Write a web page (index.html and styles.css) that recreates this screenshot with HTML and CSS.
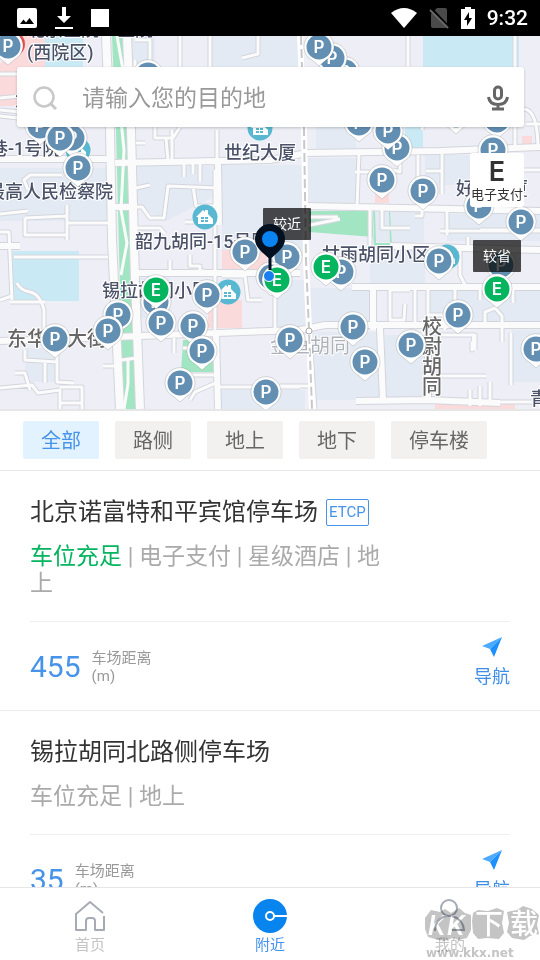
FILE: index.html
```
<!DOCTYPE html>
<html lang="zh-CN">
<head>
    <meta charset="UTF-8">
    <meta name="viewport" content="width=device-width, initial-scale=1.0">
    <title>附近停车场</title>
    <link rel="stylesheet" href="styles.css">
</head>
<body>
    <!-- Status bar -->
    <header class="status-bar">
        <svg class="status-icon" viewBox="0 0 20 20" width="20" height="20">
            <path fill="#fff" fill-rule="evenodd" d="M2 0h16a2 2 0 0 1 2 2v16a2 2 0 0 1-2 2H2a2 2 0 0 1-2-2V2a2 2 0 0 1 2-2zM3 16h14l-4.500-6-3.500 4.500-2.500-3z"/>
        </svg>
        <svg class="status-icon" viewBox="0 0 18 24" width="18" height="24">
            <path fill="#fff" d="M7 1h4v9h5l-7 7-7-7h5zM0 21h18v2H0z"/>
        </svg>
        <span class="status-square"></span>
        <div class="status-right">
            <svg viewBox="0 0 26 20" width="26" height="20">
                <path fill="#fff" d="M0 5Q13-5 26 5L13 20z"/>
            </svg>
            <svg viewBox="0 0 20 22" width="20" height="22">
                <path fill="#4a4a4a" d="M8 1h8a2 2 0 0 1 2 2v16a2 2 0 0 1-2 2H4a2 2 0 0 1-2-2V7z"/>
                <path stroke="#000" stroke-width="2" d="M2 1l18 19"/>
                <path stroke="#666" stroke-width="2" d="M1 3l18 18"/>
            </svg>
            <svg viewBox="0 0 14 22" width="14" height="22">
                <path fill="#fff" d="M4 0h6v2h4v20H0V2h4z"/>
                <path fill="#000" d="M8 5l-5 8h3v6l5-8H8z"/>
            </svg>
            <span class="clock">9:32</span>
        </div>
    </header>

    <!-- Map -->
    <section class="map">
        <svg class="map-canvas" viewBox="0 36 540 373" preserveAspectRatio="xMidYMin slice">
            <defs>
                <g id="pin-p">
                    <path class="pin-shape" d="M0 19L-7 13A15 15 0 1 1 7 13z"/>
                    <circle class="pin-blue" r="12.500"/>
                    <text class="pin-letter" x="0" y="6">P</text>
                </g>
                <g id="pin-e">
                    <path class="pin-shape" d="M0 19L-7 13A15 15 0 1 1 7 13z"/>
                    <circle class="pin-green" r="12.500"/>
                    <text class="pin-letter" x="0" y="6">E</text>
                </g>
                <g id="building">
                    <circle class="poi" r="12.500"/>
                    <path fill="#fff" d="M-9 0L-2-7 0-5V-7H3V-3L8 2V7H-7V0z"/>
                    <path class="poi-window" d="M-4 0h3v2h-3zM0 0h3v2H0zM-4 3h3v2h-3zM0 3h3v2H0z"/>
                </g>
                <path id="roads-small" d="M0 98L20 96M0 116L18 118M0 110L20 112M0 74H20M135 60V90L142 92 148 75H160M135 40H150V74M180 36V70M210 36V70M135 100H300M258 36V54L242 58M348 92L408 90V36M408 85L426 89H464M426 92L422 130M425 72H436V84H426M483 99H512M515 36V150M524 109Q538 110 538 150M526 124H540
                    M155 127V138H166L168 160M180 127L173 138H158M172 130V160M217 130V162M0 214L28 211M25 218V235H68M25 218L67 216M67 205V240M67 223H108M28 190L24 180 30 175H62M0 232H9L12 300M14 257H108M17 283Q20 290 30 292T44 310V335M10 302H45M0 300L12 296
                    M136 143H145M136 188L150 185M133 207H142L150 218H164L168 186 218 188M193 186L196 206H215M184 163V177M193 163V174M200 163V182M135 228H160L165 234M135 273L205 271M215 170V330M170 260V272M190 255V266H200V272M222 276H245L248 300H262M185 222H200M205 280V298M240 250H300
                    M359 153L357 207M355 172H370M418 155V188M426 171H442V194M442 154V170M382 207V228H410M370 246V210M400 155V172L393 170M340 219L305 226M310 217H338M422 208V216H415M447 208V235M440 231H540M468 237V250M480 230H540M510 153V207M499 170H540
                    M428 288V326M390 289V320H404L405 304M390 290H410M415 284V326M428 315H443L445 330M455 285V325M480 285V300M513 285V303M460 250V275L465 285M472 342V350L474 334M485 325V312L495 308 502 316 502 342M440 335H475V350M511 333V385M440 376H486M470 390V406M480 386V406M490 402V382M500 402H540
                    M25 350V360L57 362M57 335V382L74 383M45 362V383M15 373H25L30 390M0 388L32 385 38 393 60 390V409M60 387H82V409M60 403H82M103 366H115M174 338V353M183 348H190M218 382L195 392 190 400M190 375H215M220 387H300M275 290V330M310 340L315 409M280 386H310M115 361L136 358"/>
                <path id="roads-large" d="M0 159H112M115 163L270 160 307 153 440 151 540 147M307 206L540 211M390 246L540 250M352 287H540M218 163L219 225M133 273H300M373 287V330M0 246H20M115 207H136M0 341L115 337 270 331 300 330 325 325H540M380 328L383 400M356 401L428 400 500 403M216 335L218 409M428 335V400"/>
                <path id="roads-main" d="M106 36L110 130 112 240 120 409M127 36L131 130 135 280 140 409"/>
            </defs>

            <!-- blocks, water and parks -->
            <rect class="land" x="0" y="36" width="540" height="373"/>
            <path class="block" d="M132 36h23v35h-23zM210 36h90v35h-90zM0 168h108v53H0zM136 166h80v30l-50 25-30-15zM222 165h82v92h-82zM308 158h50v48h-50zM374 212h50v30h-50zM447 214h93v27h-93zM370 246h55v38h-55zM428 285h112v40H428zM308 288h65v35h-65zM25 348h30v34H25zM140 278h30v40h-30zM312 332h67v68h-67zM385 335h43v65h-43zM512 330h28v52h-28zM220 390h85v19h-85zM275 280h32v48h-32zM425 155h55v30h-55zM316 127h40v22h-40z"/>
            <path class="water" d="M45 36h38v35H45zM13 251h66v50H13zM423 36h96v35h-96zM405 127h18v25h-18z"/>
            <path class="pink" d="M0 64L18 36h27v70H0zM222 250h45v22h-45zM208 300h34v28h-34zM375 190h14v13h-14zM522 136h10v9h-10zM435 403h80v6h-80z"/>
            <path class="park" d="M112 36h12l5 94 8 279h-14L116 130zM309 211h63l2 35h18l-2-35h-17l1 26-65-5zM183 340h30v32h-32zM375 211h14l1 32h-14z"/>

            <use class="road-edge" href="#roads-small"/>
            <use class="road-edge road-edge-large" href="#roads-large"/>
            <use class="road-edge road-edge-main" href="#roads-main"/>
            <use class="road" href="#roads-small"/>
            <use class="road road-large" href="#roads-large"/>
            <use class="road road-main" href="#roads-main"/>
            <path class="road" d="M117 36L123 70 119 100 124 150 121 210 127 243 121 275M128 360V384L124 409"/>
            <path class="rail-bed" d="M300 36L304 130 306 260 309 330 312 409"/>
            <path class="rail" d="M301 36L304 130 306 260 309 330 312 409"/>
            <circle class="station" cx="309" cy="331" r="3"/>

            <!-- place names -->
            <g class="place">
                <text x="27" y="36">北京医院一医院</text>
                <text x="27" y="59">(西院区)</text>
                <text x="-10" y="155">巷-1号院</text>
                <text x="-13" y="198">最高人民检察院</text>
                <text x="224" y="159">世纪大厦</text>
                <text x="135" y="248">韶九胡同-15号院</text>
                <text x="102" y="297">锡拉胡同小区</text>
                <text x="322" y="261">甘雨胡同小区</text>
                <text x="456" y="195">好润大厦</text>
                <text x="15" y="106">大</text>
                <text x="530" y="405">青年</text>
                <text class="street" x="7" y="346">东华门大街</text>
                <text class="street light" x="270" y="353">金鱼胡同</text>
                <text class="street" x="422" y="334">校</text>
                <text class="street" x="422" y="354">尉</text>
                <text class="street" x="422" y="374">胡</text>
                <text class="street" x="422" y="394">同</text>
            </g>

            <!-- buildings -->
            <use href="#building" x="205" y="217"/>
            <use href="#building" x="260" y="128"/>
            <use href="#building" x="228" y="292"/>
            <use href="#building" x="447" y="257"/>
            <use href="#building" x="78" y="150"/>

            <!-- parking pins -->
            <circle cx="12" cy="44" r="13" fill="#e94f4f"/>
            <use href="#pin-p" x="8" y="46"/>
            <use href="#pin-p" x="148" y="75"/>
            <use href="#pin-p" x="345" y="72"/>
            <use href="#pin-p" x="332" y="58"/>
            <use href="#pin-p" x="319" y="47"/>
            <use href="#pin-p" x="72" y="138"/>
            <use href="#pin-p" x="40" y="126"/>
            <use href="#pin-p" x="60" y="138"/>
            <use href="#pin-p" x="78" y="168"/>
            <use href="#pin-p" x="359" y="123"/>
            <use href="#pin-p" x="397" y="148"/>
            <use href="#pin-p" x="388" y="131"/>
            <use href="#pin-p" x="456" y="115"/>
            <use href="#pin-p" x="497" y="120"/>
            <use href="#pin-p" x="493" y="150"/>
            <use href="#pin-p" x="382" y="180"/>
            <use href="#pin-p" x="423" y="191"/>
            <use href="#pin-p" x="479" y="206"/>
            <use href="#pin-p" x="521" y="222"/>
            <use href="#pin-p" x="439" y="261"/>
            <use href="#pin-p" x="501" y="265"/>
            <use href="#pin-p" x="287" y="257"/>
            <use href="#pin-p" x="245" y="252"/>
            <use href="#pin-p" x="341" y="272"/>
            <use href="#pin-p" x="271" y="277"/>
            <use href="#pin-p" x="207" y="295"/>
            <use href="#pin-p" x="156" y="302"/>
            <use href="#pin-p" x="118" y="315"/>
            <use href="#pin-p" x="108" y="331"/>
            <use href="#pin-p" x="55" y="339"/>
            <use href="#pin-p" x="161" y="323"/>
            <use href="#pin-p" x="193" y="326"/>
            <use href="#pin-p" x="202" y="351"/>
            <use href="#pin-p" x="180" y="383"/>
            <use href="#pin-p" x="266" y="392"/>
            <use href="#pin-p" x="290" y="340"/>
            <use href="#pin-p" x="353" y="327"/>
            <use href="#pin-p" x="365" y="362"/>
            <use href="#pin-p" x="411" y="345"/>
            <use href="#pin-p" x="458" y="315"/>
            <use href="#pin-p" x="536" y="349"/>
            <use href="#pin-e" x="156" y="290"/>
            <use href="#pin-e" x="277" y="280"/>
            <use href="#pin-e" x="326" y="267"/>
            <use href="#pin-e" x="497" y="289"/>

            <!-- tips -->
            <g class="tip">
                <rect x="263" y="208" width="48" height="32" rx="1"/>
                <text x="287" y="229">较近</text>
                <rect x="473" y="240" width="48" height="32" rx="1"/>
                <text x="497" y="261">较省</text>
            </g>

            <!-- current position -->
            <circle cx="269" cy="276" r="5.500" fill="#1a7fee" stroke="#fff" stroke-width="1"/>
            <path fill="#03101f" d="M270 224a15 15 0 0 1 15 15c0 8-7 13-13.500 19v12h-3v-12C262 252 255 247 255 239a15 15 0 0 1 15-15z"/>
            <circle cx="270" cy="239" r="8" fill="#0a84f0"/>
        </svg>

        <div class="map-controls">
            <form class="search">
                <svg class="search-icon" viewBox="0 0 24 24" width="24" height="24">
                    <circle cx="11" cy="11" r="9.500" fill="none" stroke="#c8c8c8" stroke-width="2.500"/>
                    <path stroke="#c8c8c8" stroke-width="3" d="M17 17l6 6"/>
                </svg>
                <input class="search-input" type="text" placeholder="请输入您的目的地" aria-label="目的地">
                <button class="voice" type="button" aria-label="语音输入">
                    <svg viewBox="0 0 22 26" width="22" height="26">
                        <rect x="7.500" y="2" width="7" height="12" rx="3.500" fill="none" stroke="#666" stroke-width="3"/>
                        <path fill="none" stroke="#666" stroke-width="3" d="M1.500 12q1 7.500 9.500 7.500t9.500-7.500M11 19v5M5 24h12"/>
                    </svg>
                </button>
            </form>
            <button class="e-pay" type="button">
                <span class="e-pay-letter">E</span>
                <span class="e-pay-label">电子支付</span>
            </button>
        </div>
    </section>

    <!-- Filters -->
    <div class="filters">
        <button class="filter active" type="button">全部</button>
        <button class="filter" type="button">路侧</button>
        <button class="filter" type="button">地上</button>
        <button class="filter" type="button">地下</button>
        <button class="filter" type="button">停车楼</button>
    </div>

    <!-- Parking list -->
    <main class="parking-list">
        <article class="parking">
            <div class="parking-title">
                <h2>北京诺富特和平宾馆停车场</h2>
                <span class="tag">ETCP</span>
            </div>
            <p class="parking-info"><span class="free">车位充足</span> | 电子支付 | 星级酒店 | 地上</p>
            <div class="parking-row">
                <div class="distance">
                    <strong>455</strong>
                    <span>车场距离<br>(m)</span>
                </div>
                <button class="navigate" type="button">
                    <svg viewBox="0 0 20 20" width="20" height="20">
                        <path fill="#4dabff" d="M20 0L0 9l8 3z"/>
                        <path fill="#1c90ff" d="M20 0L8 12l4 8z"/>
                    </svg>
                    导航
                </button>
            </div>
        </article>
        <article class="parking">
            <div class="parking-title">
                <h2>锡拉胡同北路侧停车场</h2>
            </div>
            <p class="parking-info">车位充足 | 地上</p>
            <div class="parking-row">
                <div class="distance">
                    <strong>35</strong>
                    <span>车场距离<br>(m)</span>
                </div>
                <button class="navigate" type="button">
                    <svg viewBox="0 0 20 20" width="20" height="20">
                        <path fill="#4dabff" d="M20 0L0 9l8 3z"/>
                        <path fill="#1c90ff" d="M20 0L8 12l4 8z"/>
                    </svg>
                    导航
                </button>
            </div>
        </article>
    </main>

    <!-- Tabs -->
    <nav class="tabs">
        <a class="tab" href="#home">
            <svg viewBox="0 0 36 36" width="36" height="36">
                <path fill="none" stroke="#a6abb5" stroke-width="2" stroke-linejoin="round" d="M31 15L18 4 4 16v16h10V23q0-3 3-3h3q3 0 3 3v9h9V18"/>
            </svg>
            首页
        </a>
        <a class="tab active" href="#nearby">
            <svg viewBox="0 0 36 36" width="36" height="36">
                <circle cx="18" cy="18" r="17" fill="#0784ee"/>
                <circle cx="18" cy="18" r="4" fill="none" stroke="#fff" stroke-width="2"/>
                <path stroke="#fff" stroke-width="2" d="M22 18h14"/>
            </svg>
            附近
        </a>
        <a class="tab" href="#mine">
            <svg viewBox="0 0 36 36" width="36" height="36">
                <g fill="none" stroke="#a6abb5" stroke-width="2">
                    <circle cx="17" cy="10" r="8"/>
                    <path d="M3 33Q3 21 14 18M20 18Q31 21 32 32H20"/>
                </g>
            </svg>
            我的
        </a>
        <div class="watermark">
            <svg viewBox="0 0 116 54" width="116" height="54">
                <path class="watermark-plate" d="M1 12l6-8 9 2 5-3 6 4 8-5 6 5 6 2v15l-4 8-8 2-6-2-9 3-9-2-7-2-3-8zM49 7l5-3 10 1 9-3 7 3-2 12 2 10-5 6-12-1-9 1-5-6-1-12zM83 6l10-2 6-4 9 3 7 6-2 10 2 9-9 2-6 4-12-2-5-6 2-9z"/>
                <text class="watermark-name latin" x="4" y="29">K</text>
                <text class="watermark-name latin" x="23" y="29">K</text>
                <text class="watermark-name" x="51" y="28">下</text>
                <text class="watermark-name" x="86" y="28">载</text>
                <text class="watermark-site" x="2" y="51">www.kkx.net</text>
            </svg>
        </div>
    </nav>
</body>
</html>
```
FILE: styles.css
```
* {
    margin: 0;
    padding: 0;
    box-sizing: border-box;
}

body {
    display: flex;
    flex-direction: column;
    height: 100vh;
    font-family: Roboto, "Noto Sans CJK SC", sans-serif;
    background-color: #fff;
    color: #333;
    overflow: hidden;
}

button,
input {
    font-family: inherit;
    border: none;
    background: none;
}

button {
    cursor: pointer;
}

svg {
    display: block;
}

/* Status bar */
.status-bar {
    display: flex;
    flex-shrink: 0;
    align-items: center;
    gap: 18px;
    height: 36px;
    padding: 0 12px 0 17px;
    background-color: #000;
    color: #fff;
}

.status-square {
    width: 18px;
    height: 18px;
    background-color: #fff;
}

.status-right {
    display: flex;
    align-items: center;
    gap: 12px;
    margin-left: auto;
}

.clock {
    font-size: 21px;
    font-weight: 500;
}

/* Map */
.map {
    position: relative;
    flex-shrink: 0;
    overflow: hidden;
}

.map-canvas {
    width: 100%;
}

.land { fill: #eeeff6; }
.block { fill: #e3eaf3; }
.water { fill: #c9eaf5; }
.park { fill: #a2e5c3; }
.pink { fill: #fbdadc; }

.road-edge,
.road,
.rail-bed,
.rail {
    fill: none;
    stroke-linejoin: round;
}

.road-edge {
    stroke: #d3d5dc;
    stroke-width: 5px;
}

.road {
    stroke: #fbfbfc;
    stroke-width: 3px;
}

.road-edge-large { stroke-width: 8px; }
.road-large { stroke-width: 6px; }
.road-edge-main { stroke-width: 10px; }
.road-main { stroke-width: 8px; }

.rail-bed {
    stroke: #fff;
    stroke-width: 6px;
}

.rail {
    stroke: #c8c8c8;
    stroke-width: 2px;
    stroke-dasharray: 9 4;
}

.station {
    fill: #fff;
    stroke: #aaa;
}

.place {
    font-size: 18px;
    font-weight: 500;
    fill: #4b5268;
    stroke: #fff;
    stroke-width: 2px;
    paint-order: stroke;
}

.street {
    font-size: 20px;
    fill: #666;
}

.light {
    font-weight: 400;
    fill: #b0b2ba;
}

.poi,
.poi-window {
    fill: #58b8d2;
}

.poi,
.poi-window,
.pin-letter {
    stroke: none;
}

.pin-shape {
    fill: #fff;
    stroke: rgba(0, 0, 0, 0.15);
    stroke-width: 1px;
}

.pin-blue { fill: #638fb3; }
.pin-green { fill: #04b45f; }

.pin-letter {
    font-family: Inter, sans-serif;
    font-size: 17px;
    font-weight: 600;
    fill: #fff;
    text-anchor: middle;
}

.tip {
    font-size: 14px;
    fill: #fff;
    text-anchor: middle;
}

.tip rect {
    fill: rgba(0, 0, 0, 0.7);
}

/* Search and map buttons */
.map-controls {
    position: absolute;
    top: 31px;
    left: 17px;
    right: 16px;
    display: flex;
    flex-direction: column;
    align-items: flex-end;
    gap: 26px;
}

.search {
    display: flex;
    align-items: center;
    width: 100%;
    height: 60px;
    padding: 2px 15px 0 16px;
    background-color: #fff;
    border-radius: 3px;
    box-shadow: 0 1px 3px rgba(0, 0, 0, 0.2);
}

.search-input {
    flex: 1;
    min-width: 0;
    margin-left: 25px;
    font-size: 23px;
    color: #333;
    outline: none;
}

.search-input::placeholder {
    color: #999;
}

.e-pay {
    display: flex;
    flex-direction: column;
    align-items: center;
    justify-content: flex-end;
    width: 54px;
    height: 54px;
    padding-bottom: 3px;
    background-color: #fff;
    border-radius: 3px;
    color: #333;
}

.e-pay-letter {
    font-family: Inter, sans-serif;
    font-size: 27px;
    font-weight: 600;
    line-height: 28px;
}

.e-pay-label {
    font-size: 13px;
    line-height: 18px;
    white-space: nowrap;
}

/* Filters */
.filters {
    display: flex;
    flex-shrink: 0;
    gap: 16px;
    padding: 10px 23px 11px;
    border-top: 2px solid #e6e6e6;
    border-bottom: 1px solid #e8e8e8;
    overflow: hidden;
}

.filter {
    height: 38px;
    padding: 2px 18px 0;
    font-size: 20px;
    line-height: 36px;
    white-space: nowrap;
    color: #666;
    background-color: #f2f1ef;
    border-radius: 2px;
}

.filter.active {
    color: #4693e8;
    background-color: #e3f2ff;
}

/* Parking list */
.parking-list {
    flex: 1;
    min-height: 0;
    overflow-y: auto;
    scrollbar-width: none;
}

.parking {
    padding: 23px 30px 0;
    border-bottom: 1px solid #ebebeb;
}

.parking-title {
    display: flex;
    align-items: center;
    gap: 8px;
}

.parking-title h2 {
    font-size: 24px;
    font-weight: 400;
    line-height: 36px;
}

.tag {
    padding: 0 2px;
    font-size: 15px;
    line-height: 25px;
    color: #4693e8;
    border: 1px solid #4693e8;
    border-radius: 2px;
}

.parking-info {
    max-width: 360px;
    padding: 13px 0 24px;
    font-size: 23px;
    line-height: 27px;
    color: #aaa;
    word-break: break-all;
}

.free {
    color: #04b45f;
}

.parking-row {
    display: flex;
    align-items: flex-start;
    justify-content: space-between;
    padding: 15px 0 21px;
    border-top: 1px solid #efefef;
}

.distance {
    display: flex;
    align-items: center;
    gap: 11px;
    margin-top: 12px;
}

.distance strong {
    font-size: 30px;
    font-weight: 400;
    line-height: 36px;
    color: #4693e8;
}

.distance span {
    font-size: 15px;
    line-height: 18px;
    color: #999;
}

.navigate {
    display: flex;
    flex-direction: column;
    align-items: center;
    gap: 8px;
    font-size: 18px;
    line-height: 24px;
    color: #3e8ee8;
}

/* Tabs */
.tabs {
    position: relative;
    display: flex;
    flex-shrink: 0;
    border-top: 1px solid #e6e6e6;
    background-color: #fff;
}

.tab {
    display: flex;
    flex: 1;
    flex-direction: column;
    align-items: center;
    padding: 10px 0 4px;
    font-size: 15px;
    line-height: 22px;
    color: #c4c4c4;
    text-decoration: none;
}

.tab.active {
    color: #4693f0;
}

.watermark {
    position: absolute;
    right: 0;
    bottom: 0;
    mix-blend-mode: multiply;
    pointer-events: none;
}

.watermark-plate {
    fill: #c4c4c4;
}

.watermark-name {
    font-size: 28px;
    font-weight: 500;
    fill: #fff;
}

.latin {
    font-style: italic;
}

.watermark-site {
    font-family: "DejaVu Sans", sans-serif;
    font-size: 12px;
    font-weight: 700;
    fill: #c4c4c4;
}
```
